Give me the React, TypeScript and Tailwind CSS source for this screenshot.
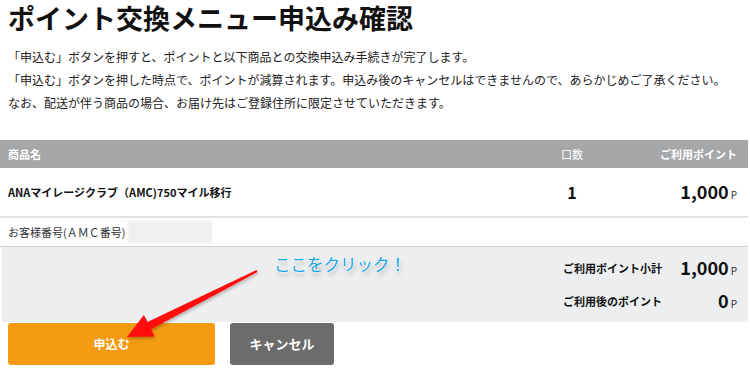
/**
 * Point exchange confirmation screen: summary of the selected item,
 * customer number, point totals and the apply / cancel buttons,
 * with a "click here" annotation drawn over the apply button.
 */

const font = "font-['Noto_Sans_CJK_JP','Noto_Sans',sans-serif]";

// ============================================================================
// Small pieces
// ============================================================================

function Points({ value, size = "text-[18px]" }: { value: string; size?: string }) {
  return (
    <span className="inline-flex items-baseline">
      <span className={`${size} font-bold text-[#111] leading-none`}>{value}</span>
      <span className="ml-[2px] text-[10px] text-[#333] leading-none">P</span>
    </span>
  );
}

/** Red callout arrow + cyan label lying over the apply button. */
function ClickHereAnnotation() {
  return (
    <>
      <svg
        className="absolute left-0 top-0 pointer-events-none"
        width={750}
        height={384}
        viewBox="0 0 750 384"
      >
        <defs>
          <filter id="arrowShadow" x="-10%" y="-10%" width="130%" height="130%">
            <feDropShadow dx="1" dy="2" stdDeviation="1.5" floodColor="#000" floodOpacity="0.25" />
          </filter>
        </defs>
        <polygon
          filter="url(#arrowShadow)"
          fill="#ff0a0a"
          points="256.5,270.1 147.5,322.1 143.9,315 127,337 154.7,336.4 151.1,329.3 257.5,271.9"
        />
      </svg>
      <div
        className="absolute left-[274px] top-[250px] text-[16.5px] leading-[28px] text-[#18a6e8] pointer-events-none"
        style={{ textShadow: "0 0 2px #fff, 0 0 3px #fff, 1px 3px 5px rgba(0,0,0,0.35)" }}
      >
        ここをクリック！
      </div>
    </>
  );
}

// ============================================================================
// Page
// ============================================================================

export default function App() {
  return (
    <div className={`relative w-[750px] h-[384px] bg-white text-[#222] ${font}`}>
      {/* Title */}
      <h1 className="px-2 pt-px text-[27px] leading-[33px] font-bold text-[#111]">
        ポイント交換メニュー申込み確認
      </h1>

      {/* Notes */}
      <div className="mt-[11px] px-2 text-[12px] leading-[23px] text-[#222]">
        <p>「申込む」ボタンを押すと、ポイントと以下商品との交換申込み手続きが完了します。</p>
        <p>「申込む」ボタンを押した時点で、ポイントが減算されます。申込み後のキャンセルはできませんので、あらかじめご了承ください。</p>
        <p>なお、配送が伴う商品の場合、お届け先はご登録住所に限定させていただきます。</p>
      </div>

      {/* Item table */}
      <div className="mt-[26px] w-[748px]">
        <div className="flex h-[28px] items-center bg-[#a6a7a9] pl-2 pr-[11px] text-[11px] font-bold text-white">
          <div className="flex-1">商品名</div>
          <div className="w-[50px] text-center font-normal">口数</div>
          <div className="w-[140px] text-right">ご利用ポイント</div>
        </div>

        <div className="flex h-[50px] items-center pl-2 pr-[11px] border-b-2 border-[#e2e2e2]">
          <div className="flex-1 text-[11px] font-bold text-[#111]">ANAマイレージクラブ（AMC)750マイル移行</div>
          <div className="w-[50px] text-center text-[16px] font-bold text-[#111]">1</div>
          <div className="w-[140px] text-right">
            <Points value="1,000" />
          </div>
        </div>

        <div className="flex h-[29px] items-center gap-[3px] pl-2 border-b border-[#cfcfcf] text-[11px] text-[#333]">
          <span>お客様番号(ＡＭＣ番号)</span>
          <span className="h-[22px] w-[84px] bg-[#efefef] blur-[1px]" />
        </div>

        {/* Totals */}
        <div className="ml-[2px] flex h-[75px] flex-col justify-center gap-[9px] bg-[#eceef0] pr-[11px]">
          <div className="flex items-center justify-end">
            <span className="w-[110px] text-[11px] font-bold text-[#111]">ご利用ポイント小計</span>
            <span className="w-[64px] text-right">
              <Points value="1,000" />
            </span>
          </div>
          <div className="flex items-center justify-end">
            <span className="w-[110px] text-[11px] font-bold text-[#111]">ご利用後のポイント</span>
            <span className="w-[64px] text-right">
              <Points value="0" />
            </span>
          </div>
        </div>
      </div>

      {/* Actions */}
      <div className="mt-px flex gap-[15px] px-2">
        <button className="h-[42px] w-[207px] rounded-[3px] bg-[#f49b12] text-[12px] font-bold text-white">
          申込む
        </button>
        <button className="h-[42px] w-[104px] rounded-[3px] bg-[#6c6c6c] text-[13px] font-bold text-white">
          キャンセル
        </button>
      </div>

      <ClickHereAnnotation />
    </div>
  );
}
